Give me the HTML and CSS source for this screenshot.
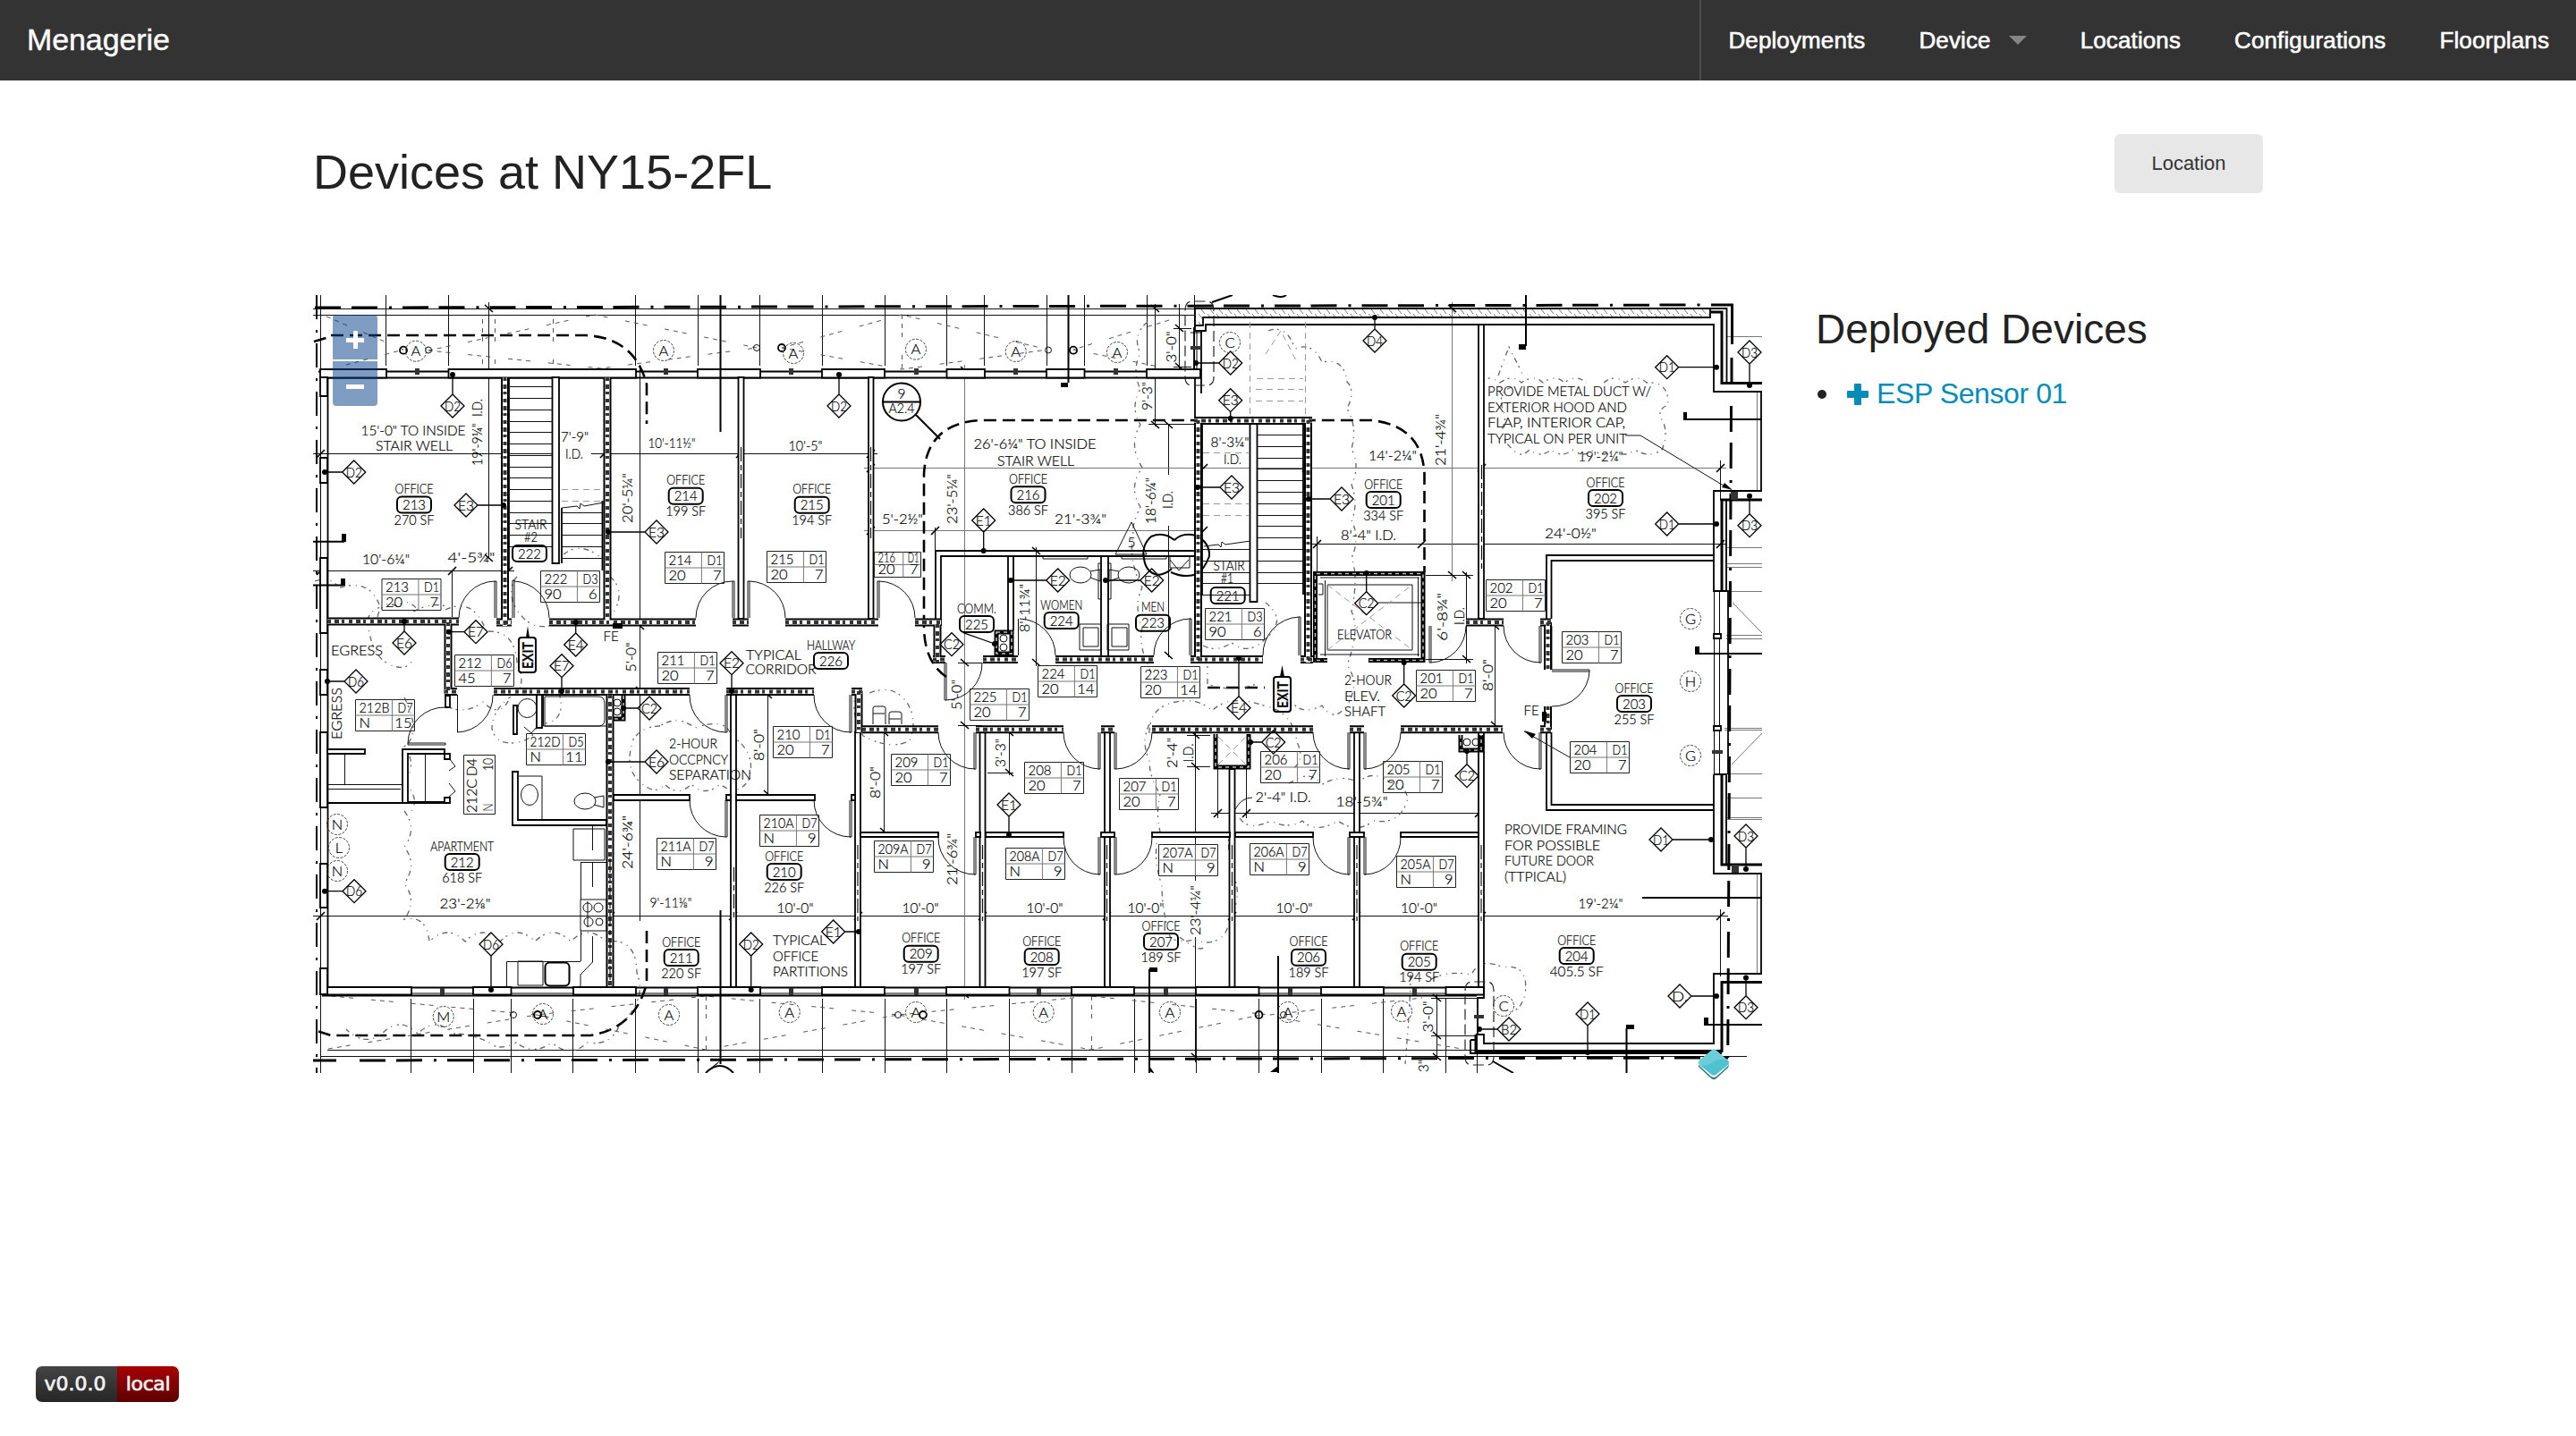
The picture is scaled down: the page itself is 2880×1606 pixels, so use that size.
FILE: index.html
```html
<!DOCTYPE html>
<html lang="en">
<head>
<meta charset="utf-8">
<title>Menagerie</title>
<link rel="stylesheet" href="styles.css">
</head>
<body>
<header class="topbar">
  <a class="brand">Menagerie</a>
  <nav class="menu">
    <a>Deployments</a>
    <a>Device<span class="caret"></span></a>
    <a>Locations</a>
    <a>Configurations</a>
    <a>Floorplans</a>
  </nav>
</header>
<main class="page">
  <div class="title-row">
    <h1>Devices at NY15-2FL</h1>
    <a class="button">Location</a>
  </div>
  <div class="content">
    <div class="map">
      <svg class="plan" id="plan" viewBox="350 330 1620 870" width="1620" height="870">
        <defs>
          <pattern id="brick" width="10" height="9" patternUnits="userSpaceOnUse"><path d="M0 0L7 9" stroke="#777" stroke-width="1" fill="none"/></pattern>
          <path id="wallsH" d="M366 695H513M555 696H572M614 696H778M819 696H837M878 696H982M1023 696H1052M1639 696H1681M1722 696H1734M497 773.5H511M552 773.5H771M812 773.5H910M952 773.5H964M964 815.7H1049M1091 815.7H1189M1231 815.7H1246M1288 815.7H1468M1509 815.7H1525M1566 815.7H1680M1722 815.7H1734M1043 737.5H1057M1099 737.5H1138M1180 737.5H1290M1331 737.5H1412M1454 737.5H1468M1335 470.5H1467"/>
          <path id="wallsV" d="M564.5 422V700M679 422V694M682 777V1103M501 696V776M1048 698V741M960 773V819M1339.5 470V740M1462.5 470V741M1730.5 696V749M1730.5 790V816"/>
          <path id="shafts" d="M1484 738.5H1470.5V641.5H1591V738.5H1530M1359 821V858H1396V821M1114 707H1131V731H1114ZM1633 822V839H1656V822M697 778V804H686"/>
        </defs>

        <!-- grid, property lines and dimension lines -->
        <g class="hair">
          <path d="M350 345.5H1335M350 352.5H1335M358.5 330V1200M431.5 330V409M501.5 330V409M710.5 330V409M780.5 330V409M849.5 330V409M919.5 330V409M989.5 330V409M1058.5 330V409M1100.5 330V409M1170.5 330V409M1212.5 330V409M1282.5 330V409M1335.5 330V413"/>
          <path d="M459.5 1117V1200M529.5 1117V1200M571.5 1117V1200M640.5 1117V1200M710.5 1117V1200M780.5 1117V1200M849.5 1117V1200M919.5 1117V1200M989.5 1117V1200M1058.5 1117V1200M1128.5 1117V1200M1198.5 1117V1200M1268.5 1117V1200M1337.5 1117V1200M1407.5 1117V1200M1477.5 1117V1200M1546.5 1117V1200M1616.5 1117V1200M1651.5 1117V1200M366 1174.5H1650M358 1181.5H1953"/>
          <path d="M350 507.5H624M661 507.5H981M350 638.5H575M505.5 638V690M546.5 338V625M1467 608.5H1930M350 1024.5H1932M715.5 408V1030M1291.5 340V477M1306.5 475V531M1306.5 588V735M1158.5 612V745M1318.5 340V413M1472.5 600V640M1639.5 640V742M1671.5 696V815M858.5 773V892M988.5 819V936M1128.5 812V867M1104 864.5H1133M1354 909.5H1658M1361.5 860V915M1393.5 860V915M1336.5 817V985M1336.5 1048V1188M1606.5 1112V1185M1600 1116.5H1651M1600 1158.5H1651M1312 367.5H1332M1312 410.5H1332M1284 474.5H1345M1594 643.5H1647M1594 737.5H1647M1045.5 590V615M1923.5 515V560M1923.5 1017V1092M1327 822.5H1353M1327 857.5H1353M1071 811.5H1098M1071 741.5H1098"/>
        </g>
        <path class="grey" d="M966 523.5H1930M966 593.5H1345M1078.5 408V1118M1623.5 338V650M1930 376.5H1970M1930 612.5H1970M1930 630.5H1970M1930 634.5H1970M1928 661.5H1970M1930 710.5H1970M1930 714.5H1970M1928 814.5H1970M1928 816.5H1970M1930 865.5H1970M1930 892.5H1970M1930 914.5H1970M1930 916.5H1970M1964.5 438V549M1964.5 977V1089M1937 674L1970 708M1936 855L1970 820"/>
        <g class="tick"><path d="M542 341l9 8M542 620l9 8M354 512l9-9M560 512l9-9M671 512l9-9M823 512l9-9M969 512l9-9M969 528l9-9M969 598l9-9M1041 598l9-9M1341 528l9-9M1341 598l9-9M1456 528l9-9M1652 528l9-9M1919 528l9-9M1468 613l9-9M1585 613l9-9M1919 613l9-9M354 643l9-9M501 643l9-9M564 643l9-9M354 1029l9-9M678 1029l9-9M815 1029l9-9M955 1029l9-9M1094 1029l9-9M1233 1029l9-9M1373 1029l9-9M1512 1029l9-9M1652 1029l9-9M1919 1029l9-9M1357 914l9-9M1389 914l9-9M1649 914l9-9M1074 410l9 8M1074 807l9 8M1074 1108l9 8M1074 737l9 8M1154 612l9 8M1154 737l9 8M1287 341l9 8M1287 471l9 8M1302 471l9 8M1302 729l9 8M1314 363l9 8M1314 406l9 8M1619 341l9 8M1619 639l9 8M1635 639l9 8M1635 733l9 8M1667 696l9 8M1667 807l9 8M854 773l9 8M854 884l9 8M984 815l9 8M984 926l9 8M1124 815l9 8M1124 860l9 8M1332 818l9 8M1332 853l9 8M1332 1178l9 8M1602 1112l9 8M1602 1154l9 8M1602 1178l9 8M711 696l9 8M711 768l9 8"/></g>

        <g class="prop">
          <path stroke-dasharray="29 12 29 13 3 12" d="M352 344H382M402 1186L1932 1183M1935.5 454L1931.7 1183M350 1186H376"/>
          <path stroke-dasharray="29 13 3 12 29 11.5" d="M393 344L1910 341"/>
          <path d="M1913 341H1936.500V385M1936 400V428"/>
          <path class="left-prop" stroke-dasharray="27 12 3 12" d="M354 330V1200"/>
        </g>
        <g class="swing-line">
          <path d="M351 382L366 377.500M370 375H655Q710 378 723 430V474M723 1041V1100Q710 1150 660 1158H370L351 1152"/>
          <path d="M1058 757Q1033 740 1033 700V530Q1036 474 1095 470H1533Q1590 476 1592.500 530V640"/>
          <path d="M1350 769H1414"/>
        </g>
        <path class="faint" d="M365 354L451 391L372 412M479 392L665 352L846 389L672 412ZM874 389L1008 352L1172 391L1008 413ZM1307 358L1200 391L1300 411M370 1114L600 1135L789 1114L1004 1135L1220 1114L1420 1135L1590 1116M367 1173L600 1135L789 1174L1004 1135L1220 1174L1410 1135L1640 1174M618.500 357V422M539.500 357V412M553.500 357V412M1008.500 352V413M789.500 1114V1174M1220.500 1114V1174"/>

        <!-- revision clouds -->
        <path class="cloud" d="M352 650q15-6 25 5M380 657q35-10 45 22q-20 8-12 28q4 25 20 35q20 10 28-3M422 690q5-20 22-12q12-10 22 3M462 684q30-15 45 0M498 682q30-15 45 22M546 706q30 0 32 35q10 20 0 35M578 645q-10 10-4 30q15 30 40 25M630 620q20-15 42 4M682 645q18 15 4 40"/>
        <path class="cloud" d="M452 907q15 20 0 40q15 20 0 41q15 20 0 40q25-5 28 25q20-20 40 0q20-20 39 0q20-20 39 0q20-20 40 0q20-20 39 0q35-5 35 35q12 30-20 60q-10 22-35 18q-20 18-40 0q-20 15-40 0q-20 10-30 0q-20-10-40-10q-20-20-40 0q-20-20-40 0q-20 15-40-5M452 780q20 40 0 55q15 20 0 40q20 20 5 35M500 790q20 10 40-5q20 20 30-5q-20 15-20 35q5 20 30 15q20-5 20-20q35 0 25-35M738 812q-20 0-30 15q-10 30 5 45q20 20 30 5q15 15 30 0q15 15 32 0q20 15 32-5q10-30-20-50q-5-20-40-8q-20-15-39-2"/>
        <path class="cloud" d="M1283 360q-18 15-8 35q-10 20 0 40q-12 20 0 40q-14 22 2 48q-16 22-2 44q-10 20-8 30q-6 30 10 60q-10 20 0 45q-5 20 10 50M1418 370q20-8 30 20q20-8 30 15q25-5 28 22q10 10 0 30q12 20 5 45q10 20 0 40q8 22 0 40q10 20 0 42q8 20 0 60q10 20-5 60q15 20 0 45q-15 20-28 0q-20 10-30 0q-15-20-20-5M1655 428q10-10 22 0q14-10 24 0q14-10 24 0q14-10 24 0q14-10 24 0M1793 428q12-10 24 0q14-10 24 0q25-2 24 25q-15 5-5 20q5 15-2 30q-15 10-30 0q-12 10-24 0q-12 10-22 0q-12 10-24 0q-12 10-24 0q-12 10-24 0q-10 10-18 0q-12-8-12-25q5-12 0-20q-6-20 10-25M1675 420L1687 388L1703 420"/>
        <path class="cloud" d="M972 775q25-10 40 8q15 20 5 45q-20 12-52-5q-12-20-10-40M1285 820q0-30 30-35q25-5 40 10q20-20 60-5q30 5 35 40q10 20-5 30M1285 810q-10 20 0 40q0 20 12 38q-5 22 0 42q-10 25 2 60q0 30 10 60q20 5 25 0q20 10 35-5q20-40 12-60q-12-40-5-60M1386 915q10 15 35 3q20 10 35 0q15 15 40 0q20 15 40 0q30 5 38-25q-5-20-20-18q-20-15-35 0q-20-10-40 2q-15-15-30-5l-10 5M1345 1060q-5 5-30-15M1600 1095q20-10 45-5q10-20 35-8q30-5 25 30q-5 20-20 20M1345 722q15 8 32-3q20 15 38-5q25-20 0-40M1350 735v30q25 10 55 0M1577 1090q0 30-6 100"/>
        <g class="hair"><path d="M1247 620L1265 584L1282 620Z"/></g>
        <path class="bigcloud" d="M1313 604Q1301 594 1287 600Q1276 610 1279 625Q1281 640 1294 643Q1304 642 1310 636M1313 604Q1322 595 1337 599Q1353 607 1352 622Q1347 636 1338 642Q1325 647 1309 640"/>

        <!-- exterior walls -->
        <g class="wall">
          <path d="M356 415.500H1335M367 422.500H1342M366 1104.500H1659M360 1113.500H1651M366.500 422V1104"/>
          <path class="thin" d="M366 1111H1651M358.500 413V1112"/>
          <path d="M358 413h74v9.500h-74zM501.500 413H711v9.500H501.500zM780 413h70v9.500h-70zM919 413h70v9.500h-70zM1058.500 413H1101v9.500h-42.500zM1170 413h42.500v9.500H1170zM1282 413h60v9.500h-60zM366 1104h94v8.500h-94zM529 1104h42.500v8.500H529zM641 1104h70v8.500h-70zM780 1104h70v8.500h-70zM919 1104h70v8.500h-70zM1058 1104h70.500v8.500H1058zM1198 1104h70v8.500h-70zM1337 1104h70.500v8.500H1337zM1477 1104h70v8.500h-70zM1616.500 1104H1659v8.500h-42.500z"/>
          <path d="M358 422h8v21h-8zM358 512h8v28h-8zM358 624h8v84h-8zM358 749h8v28h-8zM358 819h8v84h-8zM358 966h8v49h-8zM358 1083h8v29h-8z"/>
          <path fill="url(#brick)" d="M1336 345H1912V355H1345V364H1336Z"/>
          <path class="open" d="M1912 345H1930.500V428M1336 364V370H1348V363H1916V438H1970M1335 366V413M1343 370V440M1336 422V470M1970 549H1916V661H1930V559M1916 866H1930V967M1916 866V977H1970M1970 1089H1916V1167H1659V1157H1650M1644 1163V1178H1925M1644 1163H1650M1659 1104V1116H1652V1157M1930 661H1932V866M1969 438V549M1969 977V1089"/>
          <path class="open heavy" d="M1912 349H1925V428.500H1970M1970 559H1925V661M1925 866V967H1970M1970 1098.500H1925V1175.500H1650V1157"/>
          <path class="open thin" d="M1916.500 661V866M1922.500 661V866M1331 372H1343M1338 370V413"/>
          <path d="M1916 709h8v5h-8zM1916 812h8v5h-8z"/>
        </g>

        <!-- partitions -->
        <g class="wall">
          <path d="M825.500 422h6v270h-6zM971 422h5.500v270H971zM817 777h6v327h-6zM956 819h6v285h-6zM1095.500 819h6v285h-6zM1235 819h6v285h-6zM1374.500 860h6v244h-6zM1514 819h6v285h-6zM1653 819h6v285h-6zM1653 363h6v329h-6z"/>
          <path d="M686 889h85v6h-85zM812 889h5v6h-5zM823 889h88v6h-88zM952 889h4v6h-4zM962 931h87v5h-87zM1091 931h5v5h-5zM1102 931h87v5h-87zM1231 931h15v5h-15zM1288 931h87v5h-87zM1381 931h87v5h-87zM1509 931h16v5h-16zM1566 931h87v5h-87z"/>
          <path class="open" d="M1046 694V616H1336M1336 622H1052V700M1127 705V622M1133 705V622M1231 733V622M1239 733V622M1729 692V621H1916M1734.500 692V627H1916M1734.500 700V749M1729 819V906H1916M1734.500 819V900H1916"/>
          <path d="M617.500 422h7.500v208h-7.500zM1397.500 473h8v200h-8zM366 838h42v5h-42zM366 898H503V892H497V897H456V843H503V849H497V838H450V898ZM498 778h5v13h-5zM573 863H579V917H678V923H573ZM574 789h4v32h-4zM600 777h6v37h-6z"/>
          <path class="open" d="M569 422V637M1344 473V665M1457 473V665M673.500 560V638M628 568V630"/>
        </g>
        <g class="hatch-edge"><use href="#wallsH"/><use href="#wallsV"/></g>
        <g class="hatch-core"><use href="#wallsH"/><use href="#wallsV"/></g>
        <g class="hatch-fill"><use href="#wallsH"/><use href="#wallsV"/></g>
        <use class="shaft-edge" href="#shafts"/><use class="shaft-core" href="#shafts"/>
        <path class="dashline" d="M828.500 500V602M973.500 500V602M1656.500 520V640M820.500 970V1030M959 945V1030M1098.500 945V1030M1237.500 945V1030M1377.500 945V1030M1517 945V1030M1656 945V1030M682 960V1100"/>

        <!-- stairs, doors, fixtures -->
        <g class="hair">
          <path d="M569 432.500h48M569 445.500h48M569 458.500h48M569 471.500h48M569 483.500h48M569 496.500h48M569 509.500h48M569 522.500h48M569 534.500h48M569 547.500h48M569 560.500h48M569 573.500h48M569 585.500h48M569 598.500h48M569 611.500h48M628 573.500h45M628 585.500h45M628 598.500h45M628 611.500h45M628 624.500h45M628 568L645 566L648 569L649 563L653 566L675 562"/>
          <path d="M1406 486.500h51M1406 499.500h51M1406 512.500h51M1406 524.500h51M1406 537.500h51M1406 550.500h51M1406 563.500h51M1406 576.500h51M1406 588.500h51M1406 601.500h51M1406 614.500h51M1406 627.500h51M1406 640.500h51M1406 652.500h51M1344 614.500h53M1344 627.500h53M1344 640.500h53M1344 652.500h53M1344 665.500h53M1346 611L1362 609L1365 612L1366 606L1370 609L1398 605"/>
          <path d="M553 691V650H555V691M513 691A41 41 0 0 1 553 650M573 691V649H575V691M575 650A41 41 0 0 1 614 691M819 691V650H821V691M778 691A41 41 0 0 1 819 650M836 691V650H838V691M838 650A41 41 0 0 1 878 691M981 691V650H983V691M983 650A41 41 0 0 1 1023 691M1452 733V690H1454V733M1412 733A42 42 0 0 1 1452 690M1330 733V692H1332V733M1290 733A41 41 0 0 1 1331 692M1138.500 733V692M1140 692A41 41 0 0 1 1180 733"/>
          <path d="M511.500 777V819M551 777A41 41 0 0 1 511 819M811 777V819H813V777M771 777A41 41 0 0 0 811 819M950 777V819H952V777M910 777A41 41 0 0 0 951 819M811 895V936H813V895M771 895A41 41 0 0 0 811 936M950 895V936H952V895M910 895A41 41 0 0 0 951 936M1089 819V860H1091V819M1049 819A41 41 0 0 0 1090 860M1089 936V978H1091V936M1049 936A41 41 0 0 0 1090 978M1228 819V860H1230V819M1189 819A41 41 0 0 0 1229 860M1228 936V978H1230V936M1189 936A41 41 0 0 0 1229 978M1246 819V860H1248V819M1288 819A41 41 0 0 1 1248 860M1246 936V978H1248V936M1288 936A41 41 0 0 1 1248 978"/>
          <path d="M1507 819V860H1509V819M1468 819A41 41 0 0 0 1508 860M1507 936V978H1509V936M1468 936A41 41 0 0 0 1508 978M1525 819V860H1527V819M1566 819A41 41 0 0 1 1526 860M1525 936V978H1527V936M1566 936A41 41 0 0 1 1526 978M1721 819V860H1723V819M1681 819A41 41 0 0 0 1722 860M1721 700V741H1723V700M1681 700A41 41 0 0 0 1722 741M1598 700V741H1600V700M1639 700A41 41 0 0 1 1600 741M1735 749H1777V751H1735M1777 751A41 41 0 0 1 1735 790M1056 741V783H1058V741M1098 741A41 41 0 0 1 1058 783M456 831H498V833H456ZM456 831A41 41 0 0 1 498 791"/>
          <path d="M366 877.500H450M366 882.500h82M385.500 843V877M475.500 844V896M502 848L509 857L502 862M502 876L509 885L502 891M580 868H606V916M609 779h60q7 0 7 8v18q0 7-7 7h-60zM607.500 777V812H678M641 927H676V962H641ZM649.500 964V1006M649 964.500H678M662.500 924V951M662.500 964V992M649 1006H678V1041H649ZM649.500 1041V1075M662.500 1047V1076L649 1090V1103M566.500 1103V1075.500H649M579 1075H607V1102H579ZM586 813L594 820L600 813"/>
          <ellipse cx="592" cy="889" rx="9.500" ry="11.500"/><ellipse cx="654" cy="896" rx="12" ry="9"/><path d="M664 892L675 890V903L664 900"/><circle cx="589.500" cy="792" r="10.500"/><circle cx="657" cy="1015" r="5"/><circle cx="669" cy="1015" r="5"/><circle cx="658" cy="1031" r="5"/><circle cx="670" cy="1031" r="4"/><path d="M657 1008V1037"/>
          <ellipse cx="1208" cy="643" rx="12" ry="9"/><ellipse cx="1262" cy="643" rx="12" ry="9"/><path d="M1219 639L1230 637V650L1219 646M1251 639L1240 637V650L1251 646M1166 622h50v3h-50zM1254 622h50v3h-50zM1308 623v12h22v-12M1308 626L1318 638L1329 626M1207 698h24v29h-24zM1211 702h17v21h-17zM1238 698h24v29h-24zM1243 702h17v21h-17zM1228 630h3v40h-3zM1239 630h3v40h-3z"/>
          <path d="M1481.500 649V734M1484 654H1579V727H1484ZM1476 646H1587M1476 732H1587M1585.500 646V734M1474 653h5v12h-5M1527 688L1541 674H1591"/>
          <path d="M976 810V792q0-2 3-2h8q3 0 3 2v18M994 810V798q0-2 3-2h8q3 0 3 2v12M976 798h13M994 804h13M1817 487H1834L1930 545M1755 847L1704 818M1381 905Q1388 892 1400 892"/>
          <path class="stair-faint" d="M1405 423.500H1457M1404 435.500H1457M1404 448.500H1457M1459.500 360V465M1397.500 360V465M1345 506.500h52M1345 563.500h52M1345 576.500h52M628 547.500h45M628 560.500h45M1415 396L1432 370L1450 405M1484 654L1579 727M1484 727L1579 654M1362 824L1393 855M1362 855L1393 824"/>
        </g>
        <g class="bold">
          <circle cx="1008" cy="449.500" r="21"/><path d="M987 449.500H1029M1024 464L1051 491M805.500 330V483M1194.500 330V428M805.500 1018V1190M1285 1084V1200M1429 1069V1200M1706 330V387M1818.500 1150V1200M350 605.700H385M350 654.500H384M1884 469H1970M1897 731H1970M1836 1004H1970M1907 1146H1970M1355 338L1378 330M1423 330q10 4 15 0M1669 1187L1692 1200"/>
          <path d="M789 1200q16-16 31 0"/>
          <rect x="609.500" y="1076.500" width="27" height="26" rx="5"/>
          <rect x="580" y="713" width="19" height="39" rx="3"/><rect x="1424" y="757" width="19" height="39" rx="3"/>
        </g>
        <path class="envelope" d="M1325 347q0-10 8-10h16q8 0 8 10V422q0 9-8 9h-16q-8 0-8-9zM1638 1108q0-10 8-10h16q8 0 8 10V1182q0 9-8 9h-16q-8 0-8-9z"/>
        <path class="solid" d="M382 597h5v9h-5zM381 647h5v8h-5zM1186 428h8v5h-8zM1285 1082h9v5h-9zM1698 385h8v6h-8zM1882 461h4v9h-4zM1895 723h5v9h-5zM1905 1138h5v9h-5zM1818 1146h9v5h-9zM685 697h11v6h-11zM1724 796h5v11h-5zM588 713l2-13l2 13zM1431 757l2.500-13l2.500 13zM1704 817l13 4l-4 5zM1937 548l-12-3l3-5zM802 1190l-12 8l15-12zM1285 1192v6l6 3zM1429 1192l-9 7h9z"/>
        <path class="mark" d="M464 412h5v7h-5zM742 412h5v7h-5zM882 412h5v7h-5zM1022 412h5v7h-5zM1133 412h5v7h-5zM1245 412h5v7h-5zM492 1105h5v8h-5zM742 1105h5v8h-5zM882 1105h5v8h-5zM1022 1105h5v8h-5zM1159 1105h5v8h-5zM1301 1105h5v8h-5zM1440 1105h5v8h-5zM1579 1105h5v8h-5zM1331 387h12v4h-12zM1914 839h12v4h-12zM1935 550h8v9h-8zM1936 967h8v9h-8zM1648 1135h11v4h-11z"/>
        <g class="nodes"><circle cx="451" cy="391.700" r="4"/><circle cx="874" cy="389" r="4"/><circle cx="1200" cy="391.700" r="4"/><circle cx="601" cy="1135" r="4"/><circle cx="1032" cy="1135" r="4"/><circle cx="1407.500" cy="1135" r="4"/></g>
        <g class="hair"><circle cx="479" cy="391.500" r="3.500"/><circle cx="846" cy="389" r="3.500"/><circle cx="1172" cy="391.500" r="3.500"/><circle cx="574" cy="1135" r="3.500"/><circle cx="1004" cy="1135" r="3.500"/><circle cx="1435" cy="1135" r="3.500"/><circle cx="1122" cy="714" r="4"/><circle cx="1122" cy="724" r="4"/><circle cx="1640" cy="830" r="4"/><circle cx="1650" cy="830" r="4"/><circle cx="690" cy="786" r="4"/><circle cx="690" cy="796" r="4"/></g>
        <g id="labels"></g>
      </svg>
      <div class="zoom"><span class="zoom-btn plus"></span><span class="zoom-btn minus"></span></div>
      <svg class="marker" viewBox="0 0 36 36" width="36" height="36">
        <path fill="#2f7585" d="M1 20Q0 18 3 16L33 16Q36 18 34 21L21 33Q18 35.500 15 33Z"/>
        <path fill="#fff" d="M1 18Q0 16 3 14L33 14Q36 16 34 19L21 31Q18 33 15 31Z"/>
        <path fill="#4fc2cf" d="M15 2Q18-1 21 2L34 13Q36 15.500 34 18L21 28.500Q18 31 15 28.500L2 18Q0 15.500 2 13Z"/>
        <path fill="#6ccdd8" d="M15 2Q18-1 21 2L33 12.500Q24 10 17 15Q9 20 3 18.500Q0 15.500 2 13Z"/>
      </svg>
    </div>
    <aside class="devices">
      <h2>Deployed Devices</h2>
      <ul>
        <li><a><svg class="plus-icon" viewBox="0 0 24 24" width="24" height="24"><path fill="currentColor" d="M9 0h6q1 0 1 1v7h7q1 0 1 1v6q0 1-1 1h-7v7q0 1-1 1H9q-1 0-1-1v-7H1q-1 0-1-1V9q0-1 1-1h7V1q0-1 1-1z"/></svg>ESP Sensor 01</a></li>
      </ul>
    </aside>
  </div>
</main>
<footer class="footer"><div class="badge"><span class="version">v0.0.0</span><span class="env">local</span></div></footer>
<script src="plan.js"></script>
</body>
</html>
```
FILE: styles.css
```css
* { box-sizing: border-box; }
body {
  margin: 0;
  min-height: 1606px;
  display: flex;
  flex-direction: column;
  background: #fff;
  color: #222;
  font-family: "Liberation Sans", Arial, sans-serif;
}
.topbar {
  height: 90px;
  background: #333;
  display: flex;
  justify-content: space-between;
  color: #fff;
  line-height: 88px;
}
.brand { padding-left: 30px; font-size: 34px; letter-spacing: -0.1px; -webkit-text-stroke: 0.4px #fff; }
.menu { display: flex; border-left: 2px solid #4d4d4d; font-size: 26px; letter-spacing: 0.12px; -webkit-text-stroke: 0.6px #fff; }
.menu a { padding: 0 30px; height: 90px; display: flex; align-items: center; }
.caret { margin-left: 20px; border: 10px solid transparent; border-top-color: #858585; border-bottom: 0; }

.page { width: 2180px; margin: 0 auto; }
.title-row { display: flex; justify-content: space-between; align-items: flex-start; height: 240px; padding-top: 60px; }
h1, h2 { margin: 0; font-weight: 400; }
h1 { font-size: 54px; line-height: 76px; padding-top: 4px; }
.button {
  width: 166px;
  height: 66px;
  border-radius: 6px;
  background: #e7e7e7;
  color: #333;
  font-size: 22px;
  line-height: 65px;
  text-align: center;
}
.content { display: flex; gap: 60px; align-items: flex-start; }
.map { position: relative; width: 1620px; height: 870px; }
.plan { display: block; }
.zoom { position: absolute; left: 22px; top: 22px; display: flex; flex-direction: column; gap: 2px; }
.zoom-btn { width: 50px; height: 50px; display: grid; place-items: center; background: rgba(0, 60, 136, 0.5); }
.zoom-btn::before, .plus::after { content: ""; grid-area: 1 / 1; width: 20px; height: 5px; background: #fff; }
.plus { border-radius: 4px 4px 0 0; padding-top: 6px; }
.plus::after { width: 5px; height: 20px; }
.minus { border-radius: 0 0 4px 4px; padding-top: 7px; }
.marker { position: absolute; left: 1548px; top: 843px; }

.devices { padding-top: 6px; }
h2 { font-size: 46px; line-height: 64px; }
.devices ul { list-style: none; margin: 15px 0 0; padding: 0; font-size: 32px; line-height: 51px; }
.devices li { display: flex; align-items: center; }
.devices li::before { content: ""; width: 10px; height: 10px; border-radius: 50%; background: #222; margin-right: 23px; margin-left: 2px; }
.devices a { color: #008cba; display: flex; align-items: center; gap: 9px; letter-spacing: -0.4px; }

.footer { margin-top: auto; padding: 0 0 38px 40px; display: flex; }
.badge {
  display: flex;
  height: 40px;
  border-radius: 7px;
  overflow: hidden;
  font: 22px/40px "DejaVu Sans", sans-serif;
  color: #f2f2f2;
  text-align: center;
  -webkit-text-stroke: 0.7px #f2f2f2;
}
.version { width: 91px; background: linear-gradient(#444, #262626); padding-right: 3px; }
.env { width: 69px; background: linear-gradient(#a80000, #5c0000); letter-spacing: -0.4px; }

/* floor plan line work */
.plan path, .plan circle, .plan ellipse, .plan rect { fill: none; }
.hair { stroke: #111; stroke-width: 1; }
.grey { stroke: #777; stroke-width: 1; }
.tick { stroke: #000; stroke-width: 1.6; }
.prop { stroke: #000; stroke-width: 3; }
.left-prop { stroke-width: 2; }
.swing-line { stroke: #000; stroke-width: 2.6; stroke-dasharray: 14 7; }
.faint { stroke: #555; stroke-width: 1; stroke-dasharray: 5 5 5 5 5 20; }
.cloud { stroke: #666; stroke-width: 1.3; stroke-dasharray: 6 4 2 6 1 5; }
.bigcloud { stroke: #000; stroke-width: 2; }
.envelope { stroke: #222; stroke-width: 1.2; stroke-dasharray: 12 5; }
.plan .wall path { stroke: #000; stroke-width: 1.8; fill: #fff; }
.plan .wall path[fill^="url"] { fill: url(#brick); }
.plan .wall .open { fill: none; }
.plan .wall .thin { fill: none; stroke-width: 1; }
.plan .wall .heavy { stroke-width: 3; }
.hatch-edge { stroke: #000; stroke-width: 9; }
.hatch-core { stroke: #fff; stroke-width: 5; }
.hatch-fill { stroke: #333; stroke-width: 4; stroke-dasharray: 4 4 5 3 3 5; }
.shaft-edge { stroke: #000; stroke-width: 5; fill: none; }
.shaft-core { stroke: #bbb; stroke-width: 1.6; stroke-dasharray: 4 4; fill: none; }
.dashline { stroke: #111; stroke-width: 1.2; stroke-dasharray: 16 4 6 4; }
.plan .stair-faint { stroke: #999; stroke-dasharray: 7 5; }
.bold { stroke: #000; stroke-width: 2; }
.nodes { stroke: #000; stroke-width: 1.8; }
.plan .solid, .plan .dot { fill: #000; }
.plan .mark { fill: #333; }

/* floor plan lettering */
.plan text { font-family: Lato, "Open Sans", sans-serif; font-weight: 300; font-size: 16.5px; fill: #000; stroke: #000; stroke-width: 0.2px; }
.plan .exit { font-weight: 700; font-size: 17px; }
.plan .box { stroke: #222; stroke-width: 1; }
.plan .pill { stroke: #000; stroke-width: 2; }
.plan .ring { stroke: #444; stroke-width: 1; stroke-dasharray: 3 1.5; }
.plan .leader { stroke: #000; stroke-width: 1.3; }
```
FILE: plan.js
```js
const layer = document.getElementById('labels');
const add = (tag, attrs, text) => {
  const el = document.createElementNS('http://www.w3.org/2000/svg', tag);
  for (const key in attrs) el.setAttribute(key, attrs[key]);
  if (text !== undefined) el.textContent = text;
  layer.appendChild(el);
  return el;
};
/* Centered lettering fitted to a drawn width, optionally turned to read upwards. */
const word = (text, x, y, width, turned, cls) => {
  const attrs = { x, y, 'text-anchor': 'middle' };
  if (width) { attrs.textLength = width; attrs.lengthAdjust = 'spacingAndGlyphs'; }
  if (turned) attrs.transform = `rotate(-90 ${x} ${y})`;
  if (cls) attrs.class = cls;
  return add('text', attrs, text);
};

/* Wall type diamonds: label, center, leader end */
[
  ['D2',506,454,506,419],['D2',395.7,528,363,528],['E3',521,565,563,565],['E3',734,595,680,595],
  ['E6',452,719,452,695],['E7',532,706.7,502,706.7],['E4',643.7,721,643.7,696],['E7',628,744.7,628,773],
  ['D6',398,762,366,762],['D2',938,454,938,419],['E1',1099.7,582,1099.7,616],['C2',1064,720.7,1112,720],
  ['E2',818,741.7,818,773],['D4',1537,381,1537,355],['D2',1375.7,406,1337,406],['E3',1375.7,447.7,1375.7,468],
  ['E3',1377,545,1339,545],['E3',1500,558,1463,558],['E2',1182.7,649,1130,649],['E2',1287.7,649,1236,649],
  ['C2',1527.7,674.7,1527.7,641],['D1',1863.7,410.7,1919,410.7],['D3',1956,394,1956,431],['D1',1863.7,586,1919,586],
  ['D3',1956,587.7,1956,554.7],['C2',726,792,697,792],['E6',734,852,680,852],['D6',396,996.7,363,996.7],
  ['D6',549,1056,549,1107],['D2',839.7,1056,839.7,1107],['E1',931.7,1042,960,1042],['E1',1128,900,1128,933.7],
  ['E4',1385,791.7,1385,736],['C2',1423.7,830,1398,830],['C2',1569.7,778,1569.7,741],['C2',1640,867.7,1640,840],
  ['D1',1857,939,1913,939],['D3',1952,935,1952,972],['D.',1878,1114,1919,1114],['D3',1952,1126.7,1952,1093.6],
  ['D1',1775,1134,1775,1177],['B2',1687,1151,1654,1151]
].forEach(([label, x, y, tx, ty]) => {
  const sx = x + Math.sign(Math.round(tx - x)) * 13;
  const sy = y + Math.sign(Math.round(ty - y)) * 13;
  add('path', { class: 'leader', d: `M${sx} ${sy}L${tx} ${ty}M${x - 13} ${y}l13-13l13 13l-13 13z` });
  add('circle', { class: 'dot', cx: tx, cy: ty, r: 3 });
  word(label, x, y + 5.5, 18);
});

/* Window marks */
[
  ['A',465,392.7],['A',742,392],['A',887,395],['A',1024,390.7],['A',1135.7,393],['A',1249,394],['C',1375,383],
  ['M',495.7,1137],['A',607,1134],['A',748,1135],['A',882.7,1132],['A',1024,1132],['A',1166.7,1132],['A',1308,1132],
  ['A',1440,1132],['A',1567,1131],['C',1681,1125],['G',1890,692],['H',1890,762],['G',1890,845],
  ['N',377,922],['L',379,948],['N',377,974]
].forEach(([label, x, y]) => {
  add('circle', { class: 'ring', cx: x, cy: y, r: 11.5 });
  word(label, x, y + 5.5);
});

/* Rooms: name, number, area, pill center */
[
  ['OFFICE','213','270 SF',463,564.5],['OFFICE','214','199 SF',766.7,554.7],['OFFICE','215','194 SF',907.7,564.7],
  ['OFFICE','216','386 SF',1149.5,553.3],['OFFICE','201','334 SF',1546.7,559],['OFFICE','202','395 SF',1795,557],
  ['OFFICE','203','255 SF',1827,787],['APARTMENT','212','618 SF',516.7,964],['OFFICE','211','220 SF',761.7,1071],
  ['OFFICE','210','226 SF',876.7,975],['OFFICE','209','197 SF',1029.7,1066.7],['OFFICE','208','197 SF',1164.7,1070],
  ['OFFICE','207','189 SF',1298,1053],['OFFICE','206','189 SF',1463,1070.7],['OFFICE','205','194 SF',1586.7,1075.7],
  ['OFFICE','204','405.5 SF',1762.7,1069],['COMM.','225','',1092,698],['WOMEN','224','',1186.7,694],
  ['MEN','223','',1289,696.7],['HALLWAY','226','',929,739],['','221','',1372.7,666],['','222','',592,619]
].forEach(([name, number, area, x, y]) => {
  const widths = { OFFICE: 43, APARTMENT: 71, 'COMM.': 44, WOMEN: 47, MEN: 26, HALLWAY: 54 };
  if (name) word(name, x, y - 12.5, widths[name]);
  add('rect', { class: 'pill', x: x - 19, y: y - 9, width: 38, height: 18, rx: 5 });
  word(number, x, y + 5.5, 26);
  if (area) word(area, x, y + 22.5, area.length > 6 ? 60 : 45);
});

/* Door schedule tags: number, type, width, height, position */
const tag = (number, type, width, height, x, y, w = 66, h = 35) => {
  add('path', { class: 'box', d: `M${x} ${y}h${w}v${h}h${-w}z` });
  add('path', { class: 'grey', d: `M${x} ${y + h / 2}h${w}M${x + w * 0.62} ${y}v${h}` });
  const fit = (n, len) => Object.assign({ textLength: len, lengthAdjust: 'spacingAndGlyphs' }, n);
  const small = w < 66 ? 0.75 : 1;
  add('text', fit({ x: x + 4, y: y + h * 0.4 }, (number.length > 3 ? 34 : 26) * small), number);
  add('text', fit({ x: x + w - 2, y: y + h * 0.4, 'text-anchor': 'end' }, 17 * small), type);
  add('text', { x: x + 4, y: y + h * 0.89 }, width);
  add('text', { x: x + w - 3, y: y + h * 0.89, 'text-anchor': 'end' }, height);
};
[
  ['213','D1','20','7',427,647.5],['222','D3','90','6',604.5,638.5],['212','D6','45','7',508.5,732.5],
  ['214','D1','20','7',743.5,617.5],['215','D1','20','7',857.5,616.5],['216','D1','20','7',977.5,617.5,52,28],
  ['211','D1','20','7',735.5,729.5],['221','D3','90','6',1347.5,680.5],['224','D1','20','14',1160.5,744.5],
  ['223','D1','20','14',1275.5,745.5],['202','D1','20','7',1661.5,648.5],['203','D1','20','7',1746.5,706.5],
  ['201','D1','20','7',1583.5,749.5],['212B','D7','N','15',397.5,782.5],['212D','D5','N','11',588.5,820.5],
  ['211A','D7','N','9',734.5,937.5],['210','D1','20','7',864.5,812.5],['209','D1','20','7',996.5,843.5],
  ['210A','D7','N','9',849.5,911.5],['209A','D7','N','9',977.5,940.5],['225','D1','20','7',1084.5,770.5],
  ['208','D1','20','7',1145.5,852.5],['207','D1','20','7',1251.5,870.5],['206','D1','20','7',1409.5,840.5],
  ['208A','D7','N','9',1124.5,948.5],['207A','D7','N','9',1295.5,944.5],['206A','D7','N','9',1397.5,943.5],
  ['205','D1','20','7',1546.5,851.5],['204','D1','20','7',1755.5,829.5],['205A','D7','N','9',1561.5,957.5]
].forEach((row) => tag(...row));
add('path', { class: 'box', d: 'M518.500 844.500h35v66h-35z' });
word('212C', 533, 890, 38, true);
word('D4', 533, 858, 20, true);
word('N', 551, 903, 9, true);
word('10', 551, 855, 14, true);

/* Notes and dimensions: text, center x, baseline, width, turned */
[
  ['15\'-0" TO INSIDE',462,487,117],['STAIR WELL',463,504,86],['19\'-9¼"',539,497,48,1],['I.D.',539,456,20,1],
  ['7\'-9"',642.5,494,31],['I.D.',642,513,20],['10\'-6¼"',431.5,631,53],['4\'-5¾"',527,629,53],
  ['STAIR',593.5,592,36],['#2',593.5,606,15],['EGRESS',399,733,58],['EGRESS',382,798,58,1],['FE',683,717,17],
  ['20\'-5¼"',707,557,56,1],['5\'-0"',711,735,33,1],['10\'-11½"',751,501,53],['10\'-5"',900.5,504,38],
  ['TYPICAL',865,738,62],['CORRIDOR',873,754,79],['26\'-6¼" TO INSIDE',1157,502,137],['STAIR WELL',1158,521,86],
  ['5\'-2½"',1009,586,46],['21\'-3¾"',1208,586,58],['23\'-5¼"',1070,558,56,1],['18\'-6¼"',1292,560,52,1],
  ['I.D.',1311,559,20,1],['9\'-3"',1288,443,32,1],['3\'-0"',1315,388,35,1],['8\'-11¾"',1151,680,54,1],
  ['8\'-3¼"',1375,500,43],['I.D.',1378,519,20],['STAIR',1374,638,35],['#1',1372,652,14],['ELEVATOR',1525.500,715,61],
  ['14\'-2¼"',1557,515,54],['8\'-4" I.D.',1530,604,62],['21\'-4¾"',1616,492,58,1],['6\'-8¾"',1618,690,54,1],
  ['I.D.',1637,689,20,1],['8\'-0"',1669,755,36,1],['19\'-2¼"',1789.500,516,50],['24\'-0½"',1756,602,58],
  ['24\'-6¾"',707,942,60,1],['23\'-2⅛"',520,1016,57],['9\'-11⅛"',750,1015,47],
  ['10\'-0"',889,1021,41],['10\'-0"',1029,1021,41],['10\'-0"',1168,1021,41],['10\'-0"',1281,1021,41],
  ['10\'-0"',1447,1021,41],['10\'-0"',1586.500,1021,41],['19\'-2¼"',1789.500,1016,50],
  ['8\'-0"',854,833,36,1],['8\'-0"',984,875,36,1],['3\'-3"',1124,842,32,1],['5\'-0"',1075,777,34,1],
  ['21\'-6¾"',1070,961,58,1],['23\'-4¼"',1342,1018,56,1],['2\'-4"',1316,842,34,1],['I.D.',1334,842,21,1],
  ['2\'-4" I.D.',1434.500,897,62],['18\'-5¾"',1522.500,902,58],['3\'-0"',1602,1137,35,1],['3"',1597,1192,14,1],
  ['9',1008,446,9],['A2.4',1008,462,29],['5',1265,612,9],['FE',1712,800,17]
].forEach((row) => word(...row));
word('EXIT', 596, 733, 30, true, 'exit');
word('EXIT', 1440, 777, 30, true, 'exit');

/* Left aligned notes: x, first baseline, [line, width] */
[
  [1663,443,['PROVIDE METAL DUCT W/',183],['EXTERIOR HOOD AND',156],['FLAP, INTERIOR CAP,',154],['TYPICAL ON PER UNIT',156]],
  [1682,933,['PROVIDE FRAMING',137],['FOR POSSIBLE',107],['FUTURE DOOR',100],['(TTPICAL)',69]],
  [748,837,['2-HOUR',54],['OCCPNCY',66],['SEPARATION',92]],
  [864,1057,['TYPICAL',60],['OFFICE',51],['PARTITIONS',84]],
  [1503,766,['2-HOUR',53],['ELEV.',40],['SHAFT',46]]
].forEach(([x, y, ...lines]) => lines.forEach(([text, width], i) => {
  add('text', { x, y: y + i * 17.5, textLength: width, lengthAdjust: 'spacingAndGlyphs' }, text);
}));
```
